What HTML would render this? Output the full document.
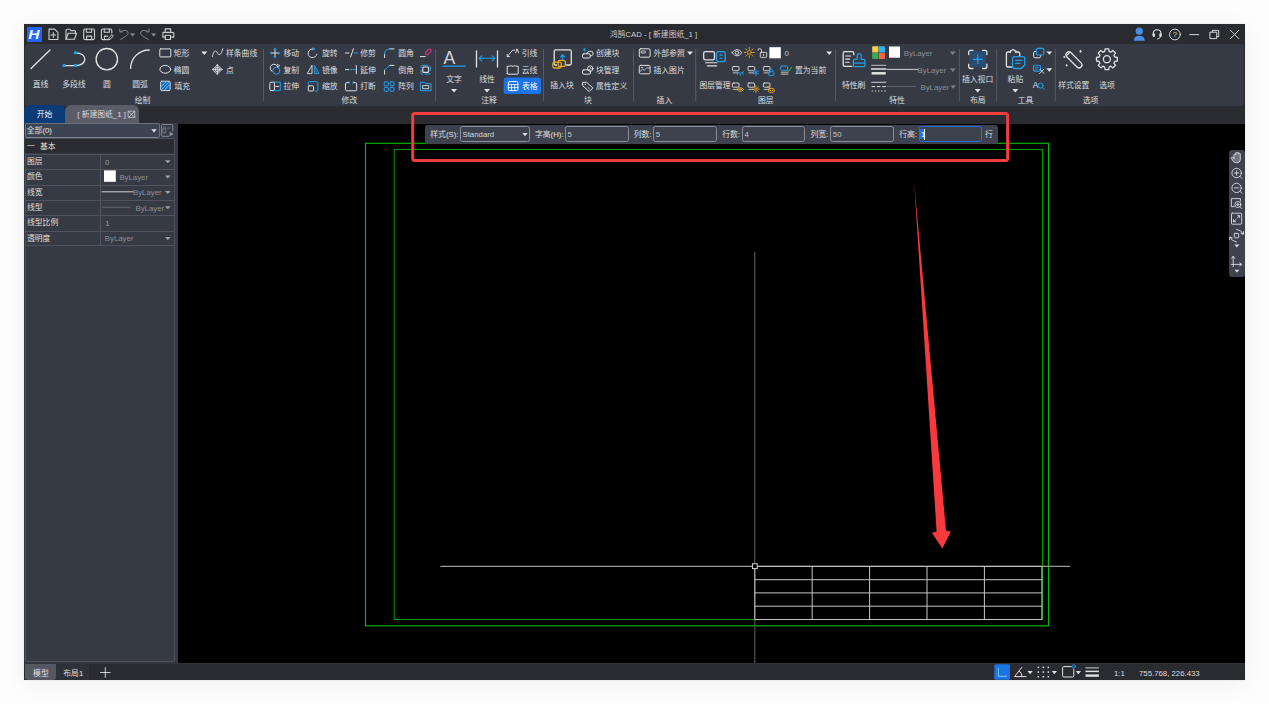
<!DOCTYPE html>
<html lang="zh-CN">
<head>
<meta charset="utf-8">
<title>鸿鹄CAD</title>
<style>
html,body{margin:0;padding:0;}
body{width:1269px;height:704px;background:#fdfdfd;position:relative;overflow:hidden;font-family:"Liberation Sans","Noto Sans CJK SC",sans-serif;font-weight:350;}
.b{position:absolute;box-sizing:border-box;}
.t{position:absolute;white-space:nowrap;line-height:12px;height:12px;}
.t.c{width:120px;text-align:center;}
.ov{position:absolute;left:0;top:0;pointer-events:none;}
.inp{position:absolute;box-sizing:border-box;top:126.4px;height:15.6px;border:1px solid #8b8f98;border-radius:2.5px;background:#3d424e;}
</style>
</head>
<body>
<!-- window -->
<div class="b" style="left:24px;top:24px;width:1221px;height:656px;background:#000;box-shadow:0 4px 22px rgba(0,0,0,.06),0 0 2px rgba(0,0,0,.08);"></div>
<div class="b" style="left:24px;top:24px;width:1221px;height:82px;background:#2a2b31;"></div>
<div class="b" style="left:24.7px;top:44.4px;width:1219.5px;height:61.2px;background:#363a44;border-radius:3px;"></div>
<div class="b" style="left:24px;top:105.7px;width:1221px;height:18.1px;background:#2b2c32;"></div>
<!-- doc tabs -->
<div class="b" style="left:24.3px;top:105.4px;width:40.6px;height:17.6px;background:#0c3c78;border-radius:6px 6px 0 0;"></div>
<div class="b" style="left:64.9px;top:105.4px;width:73.7px;height:17.6px;background:#5a5d67;border-radius:6px 6px 0 0;"></div>
<!-- left panel -->
<div class="b" style="left:24px;top:123px;width:154px;height:540px;background:#363a44;"></div>
<div class="b" style="left:24.8px;top:123.2px;width:134.8px;height:14.4px;background:#3c4454;border:1px solid #6c707b;border-bottom-color:#80848e;border-radius:2px;"></div>
<div class="b" style="left:24.6px;top:138.4px;width:150.4px;height:523.6px;border:1px solid #4b4e58;border-radius:2px;"></div>
<div class="b" style="left:25.3px;top:139.1px;width:149px;height:14.4px;background:#2b2c32;"></div>
<div class="b" style="left:25.3px;top:153.5px;width:149px;height:92px;background:repeating-linear-gradient(to bottom,#50535d 0,#50535d .9px,transparent .9px,transparent 15.33px);border-bottom:1px solid #50535d;"></div>
<div class="b" style="left:100.3px;top:153.5px;width:1px;height:92px;background:#50535d;"></div>
<svg class="ov" width="1269" height="704" viewBox="0 0 1269 704" fill="none">
<rect x="365.5" y="143.3" width="683" height="482.5" stroke="#00c000" stroke-width="1.1"/>
<rect x="394.2" y="149.5" width="648.3" height="470" stroke="#00a000" stroke-width="1"/>
<path d="M754.8 251.7V663.5" stroke="#5a5a5a" stroke-width="1.1"/>
<path d="M440.4 566.4H1070" stroke="#9a9a9a" stroke-width="1.1"/>
<path d="M754.8 566.4V619.5M812.2 566.4V619.5M869.6 566.4V619.5M927 566.4V619.5M984.4 566.4V619.5M1041.9 566.4V619.5M754.8 566.4H1041.9M754.8 579.7H1041.9M754.8 592.9H1041.9M754.8 606.2H1041.9M754.8 619.5H1041.9" stroke="#c6c6c6" stroke-width="1" stroke-linecap="butt"/>
<rect x="752.4" y="563.8" width="4.8" height="4.8" fill="#000" stroke="#e8e8e8" stroke-width=".9"/>
</svg><!-- floating toolbar -->
<div class="b" style="left:425.2px;top:124.6px;width:572.6px;height:19.2px;background:#3d424e;border-radius:3px;"></div>
<div class="inp" style="left:459.8px;width:69.9px;"></div>
<div class="inp" style="left:565.2px;width:63.5px;"></div>
<div class="inp" style="left:653.4px;width:63.5px;"></div>
<div class="inp" style="left:742.1px;width:63.4px;"></div>
<div class="inp" style="left:830.4px;width:63.3px;"></div>
<div class="inp" style="left:918.9px;width:63.1px;border-color:#2b6fd6;border-width:1.2px;"></div>
<div class="b" style="left:920.4px;top:129.3px;width:3.6px;height:10px;background:#1e6fe0;"></div>
<div class="b" style="left:924.2px;top:129px;width:.8px;height:10.6px;background:#fff;"></div>
<!-- nav bar -->
<div class="b" style="left:1228.7px;top:150px;width:16px;height:126.5px;background:#3d424e;border-radius:3px;"></div>
<!-- status bar -->
<div class="b" style="left:24px;top:662.7px;width:1221px;height:17.3px;background:#2a2b31;border-top:1.7px solid #31333a;"></div>
<div class="b" style="left:24.6px;top:664.4px;width:31.7px;height:15.6px;background:#555862;border-radius:0 0 3px 3px;"></div>
<div class="b" style="left:56.3px;top:664.4px;width:33.1px;height:15.6px;background:#2f3138;"></div>
<svg class="ov" width="1269" height="704" viewBox="0 0 1269 704" fill="none" stroke-linecap="round" stroke-linejoin="round">
<!-- title bar -->
<rect x="27" y="27" width="15" height="15" fill="#2563f5"/>
<text transform="translate(28.3 39.2) scale(1.22 1)" font-family="Liberation Sans, sans-serif" font-size="12.8" font-weight="700" font-style="italic" fill="#e6f5ff" stroke="none">H</text>
<g stroke="#cfcfd3" stroke-width="1.1">
<path d="M49 29.1h5.6l3.3 3.3v7.1h-8.9z"/><path d="M53.3 32.6v4.8M50.9 35h4.8" stroke-width="1"/>
<path d="M66 39.3V30.6q0-1.3 1.3-1.3h2.6l1 1.3h3.6q1 0 1 1v1.4"/><path d="M66 39.3l2.2-6.1h8.4l-2.2 6.1z"/>
<rect x="83.7" y="29" width="10.8" height="10.6" rx="1.5"/><path d="M86.4 29.2v3h5.2v-3M86.6 39.4v-3.3h5v3.3"/>
<path d="M108 39.6h-5.2q-1.4 0-1.4-1.4V30.4q0-1.4 1.4-1.4h7.6q1.4 0 1.4 1.4V33"/><path d="M104.2 29.2v3h5.2v-3M104.4 39.4v-3.3h3.2"/>
<path d="M108.6 39.6l.6-2.2 2.8-2.8 1.4 1.4-2.8 2.8z" stroke-width="1"/>
<path d="M162.9 32.4h9.9q1 0 1 1v3.7h-2.4M165.3 37.1h-2.4v-3.7"/><path d="M165.2 32.2v-3.3h5.4v3.3M165.3 35.3h5.2v4.2h-5.2z"/>
</g>
<g stroke="#80838b" stroke-width="1">
<path d="M119.8 29v2.9h2.9"/><path d="M120.2 31.7q3.5-2.3 6.6-.9q3 2.3-.6 5.2l-5.7 3.6"/>
<path d="M149 29v2.9h-2.9"/><path d="M148.6 31.7q-3.5-2.3-6.6-.9q-3 2.3.6 5.2l5.7 3.6"/>
</g>
<path d="M129.9 33.6h5.2l-2.6 2.8zM151.1 33.6h5.2l-2.6 2.8z" fill="#8d9098"/>
<!-- window controls -->
<g stroke="#d6d6da" stroke-width="1">
<path d="M1189.8 34.6h9"/><path d="M1210.3 32.2h6.4v6.4h-6.4z"/><path d="M1212.3 32v-1.6h6.4v6.4h-1.8"/>
<path d="M1230.5 30.3l8.3 8.4M1238.8 30.3l-8.3 8.4"/>
<circle cx="1174.9" cy="34.5" r="5.4"/><text x="1172.7" y="37.3" font-family="Liberation Sans, sans-serif" font-size="7.8" fill="#d6d6da" stroke="none">?</text>
</g>
<circle cx="1139.3" cy="31.2" r="3.6" fill="#4a8de6"/><path d="M1133.8 40.8q.3-5 5.5-5t5.5 5z" fill="#4a8de6"/>
<g stroke="#e4e4e7" stroke-width="1.05"><path d="M1153.2 35.3v-1.5q0-4 3.9-4t3.9 4v1.5"/><path d="M1160.6 36.8q-.5 2-3 2.2" stroke-width=".9"/></g>
<rect x="1152.7" y="33.2" width="2.2" height="3.8" rx=".9" fill="#e4e4e7"/><rect x="1159.3" y="33.2" width="2.2" height="3.8" rx=".9" fill="#e4e4e7"/>
<path d="M263.5 49.5V100.5" stroke="#575a64" stroke-width="1"/>
<path d="M435.7 49.5V100.5" stroke="#575a64" stroke-width="1"/>
<path d="M543.5 49.5V100.5" stroke="#575a64" stroke-width="1"/>
<path d="M633.6 49.5V100.5" stroke="#575a64" stroke-width="1"/>
<path d="M695.7 49.5V100.5" stroke="#575a64" stroke-width="1"/>
<path d="M835.6 49.5V100.5" stroke="#575a64" stroke-width="1"/>
<path d="M959.4 49.5V100.5" stroke="#575a64" stroke-width="1"/>
<path d="M996.7 49.5V100.5" stroke="#575a64" stroke-width="1"/>
<path d="M1055.3 49.5V100.5" stroke="#575a64" stroke-width="1"/>
<g stroke="#e2e2e4" stroke-width="1.35">
<path d="M31 68.6L50 50"/>
<path d="M64 65.6H75.4C88 65.6 88 52.8 75.4 52.8"/>
<circle cx="106.8" cy="59.2" r="10.7"/>
<path d="M130.6 68.4A18.6 18.4 0 0 1 149.2 50"/>
</g>
<rect x="73.9" y="51.3" width="3" height="3" rx=".8" fill="#1ea0f2"/>
<rect x="62.5" y="64.1" width="3" height="3" rx=".8" fill="#1ea0f2"/>
<rect x="73.9" y="64.1" width="3" height="3" rx=".8" fill="#1ea0f2"/>
<g stroke="#e2e2e4" stroke-width="1">
<rect x="159.8" y="48.9" width="11" height="8" rx=".8"/>
<ellipse cx="165.3" cy="69.3" rx="5.4" ry="3.9"/>
<path d="M212.3 56.6C213.8 50 216 49.6 217.5 53S221.3 54.5 222.8 48.8"/>
<circle cx="217.4" cy="69.4" r="2.3" stroke-width=".8"/><path d="M217.4 64.4v10M212.4 69.4h10" stroke-width=".8"/><path d="M212.8 69.4l4.6-4.7 4.6 4.7-4.6 4.7z" stroke-width=".8" fill="#e2e2e433"/>
</g>
<rect x="160.6" y="81.2" width="9.6" height="9.4" rx="1.2" fill="#1b6fc0" stroke="#e2e2e4" stroke-width=".9"/>
<path d="M161.5 86.5l4.5-4.5M161.5 89.6l7.8-7.8M164.5 89.8l5-5" stroke="#6cc4ff" stroke-width=".8"/>
<path d="M201.3 51.6h6l-3 3.4z" fill="#e2e2e4" stroke="none"/>
<path d="M275 49.5v7M271.5 53h7" stroke="#e2e2e4" stroke-width="1"/>
<path d="M275 47.5l1.8 2.3h-3.6zM275 58.5l1.8-2.3h-3.6zM269.5 53l2.3-1.8v3.6zM280.5 53l-2.3-1.8v3.6z" fill="#1ea0f2"/>
<path d="M272.2 71.5a3.9 3.9 0 1 1 5.6-4.6" stroke="#e2e2e4" stroke-width="1"/>
<circle cx="276.3" cy="70.8" r="3.5" stroke="#1ea0f2" stroke-width="1"/>
<path d="M277.3 64.6l2.3.9-1.5 1.8" stroke="#e2e2e4" stroke-width=".9"/>
<path d="M274 82.2h-3q-1.2 0-1.2 1.2v6q0 1.2 1.2 1.2h3z" stroke="#e2e2e4" stroke-width="1"/>
<path d="M274 82.2h6.3v8.4H274" stroke="#1ea0f2" stroke-width="1"/><path d="M275.8 86.4h3" stroke="#e2e2e4" stroke-width="1"/>
<path d="M316.9 54.3a4.4 4.4 0 1 1-3.5-5.4" stroke="#e2e2e4" stroke-width=".95"/>
<path d="M312.8 47l2.7 2-2.9 1.7z" fill="#1ea0f2"/>
<path d="M312 65.6v8h-4.3z" stroke="#e2e2e4" stroke-width=".9"/><path d="M314.3 65.6v8h4.3z" stroke="#1ea0f2" stroke-width=".9" fill="#1ea0f255"/>
<path d="M308.3 84.4v-1.5q0-1.2 1.2-1.2h7.2q1.2 0 1.2 1.2v7q0 1.2-1.2 1.2h-1.7" stroke="#1ea0f2" stroke-width="1"/>
<rect x="308.3" y="85.8" width="5.2" height="5.2" rx=".8" stroke="#e2e2e4" stroke-width="1"/>
<path d="M345.4 53h3.6M350.6 57l2.8-8.2" stroke="#e2e2e4" stroke-width="1"/><path d="M354.3 53h1.3M356.5 53h1" stroke="#1ea0f2" stroke-width="1"/>
<path d="M345.4 69.6h3.4M356.3 65.5v8.3" stroke="#e2e2e4" stroke-width="1"/><path d="M350.3 69.6h1.5M353 69.6h2" stroke="#1ea0f2" stroke-width="1"/>
<path d="M349 82.6h-2.3q-1.2 0-1.2 1.2v5.8q0 1.2 1.2 1.2h8.8q1.2 0 1.2-1.2v-5.8q0-1.2-1.2-1.2h-2.3" stroke="#e2e2e4" stroke-width="1"/>
<path d="M349 81.6v2M353.2 81.6v2" stroke="#1ea0f2" stroke-width="1"/>
<path d="M384.6 57.6v-3.5M389.6 48.9h4.4" stroke="#e2e2e4" stroke-width="1"/><path d="M384.6 54.1q0-5.2 5-5.2" stroke="#1ea0f2" stroke-width="1"/>
<path d="M384.6 74.2v-4M389.3 65.4h4.7" stroke="#e2e2e4" stroke-width="1"/><path d="M384.6 70.2l4.7-4.8" stroke="#1ea0f2" stroke-width="1"/>
<rect x="384.3" y="81.8" width="4" height="4" rx=".9" stroke="#1ea0f2" stroke-width="1"/>
<rect x="384.3" y="87.3" width="4" height="4" rx=".9" stroke="#1ea0f2" stroke-width="1"/>
<rect x="390" y="81.8" width="4" height="4" rx=".9" stroke="#1ea0f2" stroke-width="1"/>
<rect x="390" y="87.3" width="4" height="4" rx=".9" stroke="#1ea0f2" stroke-width="1"/>
<path d="M420.3 56.6h5" stroke="#e2e2e4" stroke-width="1"/>
<rect x="425" y="50.3" width="6.4" height="3.2" rx="1.2" transform="rotate(-42 428.2 51.9)" stroke="#e0357f" stroke-width="1"/>
<rect x="421" y="65.3" width="9.4" height="8.8" rx="1.5" stroke="#1ea0f2" stroke-width="1" stroke-dasharray="5 2.5"/><rect x="422.8" y="67" width="5.8" height="5.4" rx=".8" stroke="#e2e2e4" stroke-width="1.1"/>
<path d="M420.4 90.3v-8h4l1.2 1.4h5.4v6.6z" stroke="#1ea0f2" stroke-width="1"/><path d="M422.6 88.3v-2.7h6.2v2.7z" stroke="#e2e2e4" stroke-width=".9"/>
<text x="443.4" y="64" font-family="Liberation Sans, sans-serif" font-size="17.6" fill="#d2d2d6" stroke="none">A</text>
<path d="M442.9 66.1H465.2" stroke="#1ea0f2" stroke-width="1.3"/>
<path d="M451 89.1h6l-3 3.4z" fill="#e2e2e4" stroke="none"/>
<path d="M484 89.1h6l-3 3.4z" fill="#e2e2e4" stroke="none"/>
<path d="M476.5 51v16M497.5 51v16" stroke="#e2e2e4" stroke-width="1.3"/>
<path d="M479 58.3h16M481.8 55.8l-2.8 2.5 2.8 2.5M492.2 55.8l2.8 2.5-2.8 2.5" stroke="#1ea0f2" stroke-width="1.1"/>
<path d="M507.3 56.4l5.4-6.3h2M507.2 54.3v2.3h2.3M515.6 52.8l1.5-4 1.5 4" stroke="#e2e2e4" stroke-width=".95"/>
<path d="M507.2 73.4v-7.2h2.4q1.2-1.2 2.4 0h1.4q1.2-1.2 2.4 0h2.4v7.2q0 .8-.8.8h-9.4q-.8 0-.8-.8z" stroke="#e2e2e4" stroke-width="1"/>
<rect x="503.7" y="77.6" width="37.3" height="16.4" rx="2.6" fill="#1b73e8"/>
<rect x="508.3" y="81.6" width="9.6" height="9" rx="1.3" stroke="#fff" stroke-width="1"/><path d="M508.3 84.6h9.6M508.3 87.6h9.6M511.5 84.6v6M514.7 84.6v6" stroke="#fff" stroke-width=".8"/>
<path d="M556.5 65h-1q-1.3 0-1.3-1.3V51.3q0-1.5 1.5-1.5h14.1q1.5 0 1.5 1.5v12.2q0 1.5-1.5 1.5h-3.3" stroke="#e2e2e4" stroke-width="1.3"/>
<path d="M562.6 60.5v-5M560.6 56.8l2-2.2 2 2.2" stroke="#1ea0f2" stroke-width="1.2"/>
<rect x="552.8" y="62.2" width="8.4" height="5.8" rx="1.7" stroke="#e5a918" stroke-width="1.3"/><rect x="558" y="60.4" width="7.4" height="6" rx="2" stroke="#e5a918" stroke-width="1.3"/>
<rect x="582.6" y="53.8" width="7.6" height="4.2" rx="1.2" stroke="#e2e2e4" stroke-width="1"/><path d="M586.6 53.6q.4-2.2 3-2.2h2q1.3 0 1.3 1.3v1.6q0 1.6-2.5 1.8" stroke="#e2e2e4" stroke-width="1"/>
<path d="M584.4 48.2v3.2M583 49.8h2.8" stroke="#1ea0f2" stroke-width=".9"/>
<rect x="582.6" y="69.8" width="7.8" height="4.4" rx="1.2" stroke="#e2e2e4" stroke-width="1"/><circle cx="590.3" cy="68.6" r="2.7" stroke="#e2e2e4" stroke-width="1"/><path d="M590.3 67.3v1.5h1.2" stroke="#e2e2e4" stroke-width=".7"/>
<path d="M583 82.3h3.6l6.3 5.6-3.7 3.7-6.2-5.6z" stroke="#e2e2e4" stroke-width="1"/><circle cx="585.2" cy="84.4" r=".7" fill="#e2e2e4"/><path d="M587.8 87.3l1.6 1.5" stroke="#e2e2e4" stroke-width=".8"/>
<rect x="639.3" y="48.8" width="10.8" height="8.4" rx="1.2" stroke="#e2e2e4" stroke-width="1"/><rect x="641.6" y="51" width="3.6" height="2" stroke="#e2e2e4" stroke-width=".8"/>
<rect x="639.3" y="65.4" width="10.8" height="8.4" rx="1.2" stroke="#e2e2e4" stroke-width="1"/><path d="M640 71.5l2.6-2.4 1.6 1.3 2.4-2.4h3.2M641.3 67.6h1.6" stroke="#e2e2e4" stroke-width=".8"/>
<path d="M687 51.6h6l-3 3.4z" fill="#e2e2e4" stroke="none"/>
<rect x="703.7" y="51.6" width="10.8" height="8.2" rx="1.6" stroke="#e2e2e4" stroke-width="1.3"/><path d="M705.6 62.8h11.3M707.4 65.9h9.4" stroke="#e2e2e4" stroke-width="1.1"/>
<rect x="716.6" y="51.6" width="8.6" height="10" rx="2" stroke="#1ea0f2" stroke-width="1.3"/><path d="M720 55h1.8M720 58.3h1.8" stroke="#1ea0f2" stroke-width="1.3"/>
<path d="M732 52.7q5-6.4 10 0q-5 6.4-10 0z" stroke="#e2e2e4" stroke-width=".9"/><circle cx="737" cy="52.7" r="1.7" stroke="#e2e2e4" stroke-width=".9"/>
<circle cx="749.3" cy="52.5" r="1.9" stroke="#e5a918" stroke-width=".9"/><path d="M752.6 52.5L754.4 52.5M751.6 54.8L752.9 56.1M749.3 55.8L749.3 57.6M747 54.8L745.7 56.1M746 52.5L744.2 52.5M747 50.2L745.7 48.9M749.3 49.2L749.3 47.4M751.6 50.2L752.9 48.9" stroke="#e5a918" stroke-width=".9"/>
<rect x="760.3" y="52.4" width="6.4" height="5" rx=".8" stroke="#e2e2e4" stroke-width=".9"/><path d="M761.6 52.3v-1.6q0-2-2-2t-1.7 1.5" stroke="#e2e2e4" stroke-width=".9"/><path d="M763.5 54.3v1.3" stroke="#e2e2e4" stroke-width=".8"/>
<rect x="769.4" y="47.2" width="11.4" height="11.1" fill="#fff"/>
<path d="M826.2 51.6h6l-3 3.4z" fill="#e2e2e4" stroke="none"/>
<rect x="732.4" y="66.5" width="6.6" height="4.2" rx="1" stroke="#e2e2e4" stroke-width=".9"/><path d="M733.2 72.9h5" stroke="#e2e2e4" stroke-width=".8"/>
<g transform="translate(740.3 72.6)" stroke="#1ea0f2" stroke-width=".9"><path d="M-3.4-.6q3.4 2.6 6.8 0M-2.3.8l-.8 1.3M0 1.4v1.5M2.3.8l.8 1.3"/></g>
<rect x="748" y="66.5" width="6.6" height="4.2" rx="1" stroke="#e2e2e4" stroke-width=".9"/><path d="M748.8 72.9h5" stroke="#e2e2e4" stroke-width=".8"/>
<g transform="translate(755.9 72.6)" stroke="#1ea0f2" stroke-width=".85"><path d="M0-3.2v6.4M-2.8-1.6l5.6 3.2M-2.8 1.6l5.6-3.2"/></g>
<rect x="763.4" y="66.5" width="6.6" height="4.2" rx="1" stroke="#e2e2e4" stroke-width=".9"/><path d="M764.2 72.9h5" stroke="#e2e2e4" stroke-width=".8"/>
<g transform="translate(771.3 72.6)" stroke="#1ea0f2" stroke-width=".9"><rect x="-2.6" y="-.8" width="5.2" height="3.8" rx=".6"/><path d="M-1.4-.9v-1q0-1.4 1.4-1.4t1.4 1.4v1"/></g>
<rect x="732.4" y="83" width="6.6" height="4.2" rx="1" stroke="#e2e2e4" stroke-width=".9"/><path d="M733.2 89.4h5" stroke="#e2e2e4" stroke-width=".8"/>
<g transform="translate(740.3 89.1)" stroke="#e5a918" stroke-width=".9"><path d="M-3.4.4q3.4-3.8 6.8 0q-3.4 3.8-6.8 0z"/><circle cx="0" cy=".4" r=".9"/></g>
<rect x="748" y="83" width="6.6" height="4.2" rx="1" stroke="#e2e2e4" stroke-width=".9"/><path d="M748.8 89.4h5" stroke="#e2e2e4" stroke-width=".8"/>
<g transform="translate(755.9 89.1)" stroke="#e5a918" stroke-width=".85"><circle cx="0" cy="0" r="1.1"/><path d="M0-3.3v1.2M0 2.1v1.2M-3.3 0h1.2M2.1 0h1.2M-2.3-2.3l.8.8M1.5 1.5l.8.8M-2.3 2.3l.8-.800M1.5-1.5l.8-.8"/></g>
<rect x="763.4" y="83" width="6.6" height="4.2" rx="1" stroke="#e2e2e4" stroke-width=".9"/><path d="M764.2 89.4h5" stroke="#e2e2e4" stroke-width=".8"/>
<g transform="translate(771.3 89.1)" stroke="#e5a918" stroke-width=".9"><rect x="-2.6" y="-.6" width="5.4" height="3.8" rx=".6"/><path d="M-1.6-.7v-1q0-1.3-1.3-1.3t-1.3 1"/><path d="M-.9 1.3h.1M1 1.3h.1" stroke-width="1.1"/></g>
<rect x="780.6" y="66" width="7" height="4.3" rx="1" stroke="#1ea0f2" stroke-width="1"/><path d="M781.4 72.2h6.6M781 74.1h7" stroke="#e2e2e4" stroke-width=".8"/><path d="M787.2 69.6l1.5 1.7 2.8-4.2" stroke="#37c44b" stroke-width="1"/>
<path d="M852 66.3h-7.2q-1.6 0-1.6-1.6V53.3q0-1.6 1.6-1.6h7.4q1.6 0 1.6 1.6v1.5" stroke="#e2e2e4" stroke-width="1.3"/><path d="M845.7 56h5M845.7 59.1h4M845.7 62.2h3.5" stroke="#e2e2e4" stroke-width="1.1"/>
<path d="M857.3 59.3v-3.8q0-2 1.9-2t1.9 2v3.8h2.6q1.3 0 1.3 1.3v4.7q0 1.3-1.3 1.3h-9q-1.3 0-1.3-1.3v-4.7q0-1.3 1.3-1.3zM853.5 63h11.4" stroke="#1ea0f2" stroke-width="1.25" fill="#363a44"/>
<path d="M872.2 52.5v-5q0-1.2 1.2-1.2h5v6.2z" fill="#f7d046"/><path d="M878.8 52.5v-6.2h5q1.2 0 1.2 1.2v5z" fill="#2bb7f7"/><path d="M872.2 52.9h6.2v6.2h-5q-1.2 0-1.2-1.2z" fill="#35b24f"/><path d="M878.8 52.9h6.2v5q0 1.2-1.2 1.2h-5z" fill="#f3643c"/>
<rect x="889" y="46.5" width="11" height="11.2" fill="#fff"/>
<path d="M949.8 51.6h6l-3 3.4z" fill="#7d818b" stroke="none"/>
<path d="M949.8 68.5h6l-3 3.4z" fill="#7d818b" stroke="none"/>
<path d="M950.6 85.5h5.2l-2.6 3.2z" fill="#7d818b" stroke="none"/>
<path d="M871.6 65.3h14.2" stroke="#e2e2e4" stroke-width=".8"/><path d="M871.6 69h14.2" stroke="#e2e2e4" stroke-width="1.6"/><path d="M871.6 73.3h14.2" stroke="#e2e2e4" stroke-width="2.5" stroke-linecap="butt"/>
<path d="M887 69.4H917.6" stroke="#e2e2e4" stroke-width=".9"/>
<path d="M871.6 82.3h14.2" stroke="#e2e2e4" stroke-width=".9"/><path d="M871.6 86.6h14.2" stroke="#e2e2e4" stroke-width="1" stroke-dasharray="3.6 1.7" stroke-linecap="butt"/><path d="M871.6 91h14.2" stroke="#e2e2e4" stroke-width="1" stroke-dasharray="1.3 1.9" stroke-linecap="butt"/>
<path d="M887 86.4H915.7" stroke="#777b85" stroke-width=".7"/>
<rect x="969.6" y="51" width="16.6" height="16.6" rx="2" fill="#2a4a6e"/>
<path d="M968.7 54.6v-2.3q0-2 2-2h2.3M982.6 50.3h2.3q2 0 2 2v2.3M986.9 64.2v2.3q0 2-2 2h-2.3M973 68.5h-2.3q-2 0-2-2v-2.3" stroke="#e2e2e4" stroke-width="1.3"/>
<path d="M977.8 55v8.6M973.5 59.3h8.6" stroke="#1ea0f2" stroke-width="1.3"/>
<path d="M974.7 89.1h6l-3 3.4z" fill="#e2e2e4" stroke="none"/>
<path d="M1011.5 67h-3.5q-1.6 0-1.6-1.6V53.6q0-1.6 1.6-1.6h2M1015.8 52h2.3q1.6 0 1.6 1.6v2" stroke="#e2e2e4" stroke-width="1.3"/><path d="M1010.3 52.6v-1.7h1.3q.3-1.3 1.5-1.3t1.5 1.3h1.3v1.7" stroke="#e2e2e4" stroke-width="1.1"/>
<path d="M1014.5 56.6h8.4q1.9 0 1.9 1.9v6.3l-3.6 3.7h-6.7q-1.9 0-1.9-1.9v-8.1q0-1.9 1.9-1.9z" stroke="#1ea0f2" stroke-width="1.3" fill="#363a44"/><path d="M1015.6 60.3h6.2M1015.6 63.3h4.4" stroke="#1ea0f2" stroke-width="1.3"/>
<path d="M1012.3 89.1h6l-3 3.4z" fill="#e2e2e4" stroke="none"/>
<rect x="1033.6" y="51.4" width="7" height="6.4" rx="1.4" stroke="#e2e2e4" stroke-width="1"/><rect x="1036.4" y="48.4" width="7.4" height="6.6" rx="1.4" stroke="#1ea0f2" stroke-width="1.1" fill="#363a44"/>
<path d="M1046.3 51.4h6l-3 3.4z" fill="#e2e2e4" stroke="none"/>
<rect x="1033.4" y="65.3" width="7" height="5.8" rx="1.2" stroke="#1ea0f2" stroke-width="1.1"/><path d="M1035 67.3h3.6M1035 69.1h2.6" stroke="#1ea0f2" stroke-width=".8"/><path d="M1039.5 73.6l4.5-4.5M1040 69.3l3.8 4" stroke="#e2e2e4" stroke-width=".9"/>
<path d="M1046.3 68.3h6l-3 3.4z" fill="#e2e2e4" stroke="none"/>
<text x="1032.7" y="87.6" font-family="Liberation Sans, sans-serif" font-size="8.4" fill="#e2e2e4" stroke="none">A</text><circle cx="1040.6" cy="85.6" r="2.5" stroke="#1ea0f2" stroke-width="1"/><path d="M1042.4 87.6l1.6 1.8" stroke="#1ea0f2" stroke-width="1"/>
<rect x="1064" y="57" width="20" height="5.8" rx="2.9" transform="rotate(45 1074 59.9)" stroke="#e2e2e4" stroke-width="1.3"/><path d="M1069.6 52.6l-2.6 2.6" stroke="#e2e2e4" stroke-width="1.2"/>
<path d="M1080.5 50.3v2M1079.5 51.3h2M1064.3 56.3v1.4M1063.6 57h1.4M1066.6 64.6v1.4M1065.9 65.3h1.4" stroke="#e2e2e4" stroke-width=".9"/>
<path d="M1104.7 51.4L1105.1 48.8L1108.7 48.8L1109.1 51.4L1110.9 52.2L1113 50.5L1115.6 53.1L1113.9 55.2L1114.7 57L1117.3 57.4L1117.3 61L1114.7 61.4L1113.9 63.2L1115.6 65.3L1113 67.9L1110.9 66.2L1109.1 67L1108.7 69.6L1105.1 69.6L1104.7 67L1102.9 66.2L1100.8 67.9L1098.2 65.3L1099.9 63.2L1099.1 61.4L1096.5 61L1096.5 57.4L1099.1 57L1099.9 55.2L1098.2 53.1L1100.8 50.5L1102.9 52.2z" stroke="#e2e2e4" stroke-width="1.3"/><circle cx="1106.9" cy="59.2" r="3.5" stroke="#e2e2e4" stroke-width="1.3"/><rect x="128.5" y="111.2" width="6.3" height="6.3" stroke="#d0d1d5" stroke-width=".7"/><path d="M128.7 111.4l5.9 5.9M134.6 111.4l-5.9 5.9" stroke="#d0d1d5" stroke-width=".8"/>
<path d="M151.3 129.2h5.4l-2.7 3.2z" fill="#e2e2e4" stroke="none"/>
<path d="M172.8 131v-5.3q0-1.2-1.2-1.2h-9q-1.2 0-1.2 1.2v9.4q0 1.2 1.2 1.2h6" stroke="#8d9199" stroke-width=".9"/><path d="M163.3 128.3h2.4v4.6h-2.4zM167.3 128h3M163.3 127h2.4" stroke="#8d9199" stroke-width=".7"/><path d="M169.6 131.8l4 2.3-4 2.5z" fill="#8d9199"/>
<path d="M165 160.3h5.6l-2.8 3z" fill="#9fa3ad" stroke="none"/>
<path d="M165 175.6h5.6l-2.8 3z" fill="#9fa3ad" stroke="none"/>
<path d="M165 190.9h5.6l-2.8 3z" fill="#9fa3ad" stroke="none"/>
<path d="M165 206.2h5.6l-2.8 3z" fill="#9fa3ad" stroke="none"/>
<path d="M165 236.9h5.6l-2.8 3z" fill="#9fa3ad" stroke="none"/>
<rect x="104" y="170.4" width="11.8" height="11.4" fill="#fff"/>
<path d="M102 191.8H133" stroke="#e2e2e4" stroke-width=".9"/><path d="M102.2 207.2H130.3" stroke="#777b85" stroke-width=".7"/>
<path d="M914.2 182.8L946 530.8L950.8 531.4L942.4 548.5L931.8 532.8L936.6 531.8Z" fill="#f93a3c"/>
<rect x="412.7" y="113.5" width="594.9" height="47" rx="2" stroke="#f23c3e" stroke-width="3"/>
<path d="M522.3 133h5.4l-2.7 3.2z" fill="#e2e2e4" stroke="none"/>
<g stroke="#dcdde0" stroke-width=".9">
<path d="M1233.9 158.6v-3.7q0-.8.8-.8t.8.8v-1.5q0-.8.8-.8t.8.8v-.2q0-.8.8-.8t.8.8v.9q0-.8.8-.8t.8.8v5.4q0 3.2-3.2 3.2h-1.2q-1.7 0-2.6-1.4l-1.9-2.9q-.4-.8.3-1.2t1.4.4z" fill="#dcdde055"/>
<circle cx="1236.6" cy="173" r="4.7"/><path d="M1240 176.4l1.9 2M1234.4 173h4.4M1236.6 170.8v4.4"/>
<circle cx="1236.6" cy="187.9" r="4.7"/><path d="M1240 191.3l1.9 2M1234.4 187.9h4.4"/>
<path d="M1234.3 206.6h-2.9v-8h9v2.5"/><circle cx="1237.9" cy="204.5" r="3"/><path d="M1240.1 206.8l1.7 1.8M1236.7 204.5h2.4M1237.9 203.3v2.4"/>
<rect x="1231.5" y="213.2" width="10.2" height="11" rx=".7"/><path d="M1237.6 215.7h2v2M1235.6 221.7h-2v-2M1239.6 215.7l-2.2 2.2M1233.6 221.7l2.2-2.2"/>
<rect x="1234.3" y="233.4" width="4.4" height="4.4" rx=".6"/><path d="M1236.6 229.3q5 .8 6.6 4.8M1243.6 231.6l-.3 2.6-2.4-.8M1236.5 242q-5-.8-6.6-4.8M1229.6 239.7l.3-2.6 2.4.8"/>
<path d="M1233.2 256.4v10.2M1231.2 264.4h10.4M1231.7 258.3l1.5-2.1 1.5 2.1M1239.7 262.9l2.1 1.5-2.1 1.5"/>
</g>
<path d="M1234.4 244.6h5l-2.5 2.8z" fill="#dcdde0" stroke="none"/>
<path d="M1234.4 269.8h5l-2.5 2.8z" fill="#dcdde0" stroke="none"/>
<rect x="994.3" y="664.3" width="15.7" height="15.4" rx="1.5" fill="#1b73e8"/>
<path d="M998.3 668v8.3h8.3" stroke="#7fc0ff" stroke-width="1"/>
<path d="M1026 676.6h-11.4l7.2-9.2M1019.6 671.3q2.3 1.8 2.4 5" stroke="#e2e2e4" stroke-width="1"/>
<path d="M1027.5 671.1h5.2l-2.6 3.2z" fill="#e2e2e4" stroke="none"/>
<rect x="1037.6" y="666.6" width="1.5" height="1.5" fill="#e2e2e4"/><rect x="1037.6" y="671.3" width="1.5" height="1.5" fill="#e2e2e4"/><rect x="1037.6" y="676" width="1.5" height="1.5" fill="#e2e2e4"/><rect x="1042.6" y="666.6" width="1.5" height="1.5" fill="#e2e2e4"/><rect x="1042.6" y="671.3" width="1.5" height="1.5" fill="#e2e2e4"/><rect x="1042.6" y="676" width="1.5" height="1.5" fill="#e2e2e4"/><rect x="1047.6" y="666.6" width="1.5" height="1.5" fill="#e2e2e4"/><rect x="1047.6" y="671.3" width="1.5" height="1.5" fill="#e2e2e4"/><rect x="1047.6" y="676" width="1.5" height="1.5" fill="#e2e2e4"/>
<path d="M1051.8 671.1h5.2l-2.6 3.2z" fill="#e2e2e4" stroke="none"/>
<path d="M1071.5 666.6h-7.7q-1.2 0-1.2 1.2v8q0 1.2 1.2 1.2h8.8q1.2 0 1.2-1.2v-6.3" stroke="#e2e2e4" stroke-width="1"/><circle cx="1073.8" cy="666.5" r="1.7" stroke="#1ea0f2" stroke-width="1"/>
<path d="M1075.8 671.1h5.2l-2.6 3.2z" fill="#e2e2e4" stroke="none"/>
<path d="M1085.5 667.9h13.4" stroke="#e2e2e4" stroke-width=".9" stroke-linecap="butt"/><path d="M1085.5 671.4h13.4" stroke="#e2e2e4" stroke-width="1.5" stroke-linecap="butt"/><path d="M1085.5 675.6h13.4" stroke="#e2e2e4" stroke-width="2.4" stroke-linecap="butt"/>
<path d="M100.5 672.5h9.6M105.3 667.7v9.6" stroke="#e2e2e4" stroke-width=".9"/>
</svg><div class="t c" style="left:593.5px;top:29.4px;color:#cfcfd2;font-size:7.8px;">鸿鹄CAD - [ 新建图纸_1 ]</div>
<div class="t c" style="left:-19.4px;top:79.2px;color:#e4e4e6;font-size:7.8px;">直线</div>
<div class="t c" style="left:13.9px;top:79.2px;color:#e4e4e6;font-size:7.8px;">多段线</div>
<div class="t c" style="left:47px;top:79.2px;color:#e4e4e6;font-size:7.8px;">圆</div>
<div class="t c" style="left:80px;top:79.2px;color:#e4e4e6;font-size:7.8px;">圆弧</div>
<div class="t" style="left:173.8px;top:47.9px;color:#e4e4e6;font-size:7.8px;">矩形</div>
<div class="t" style="left:173.8px;top:64.5px;color:#e4e4e6;font-size:7.8px;">椭圆</div>
<div class="t" style="left:174.5px;top:81.2px;color:#e4e4e6;font-size:7.8px;">填充</div>
<div class="t" style="left:226px;top:47.9px;color:#e4e4e6;font-size:7.8px;">样条曲线</div>
<div class="t" style="left:226px;top:64.5px;color:#e4e4e6;font-size:7.8px;">点</div>
<div class="t c" style="left:82.6px;top:95.1px;color:#e4e4e6;font-size:7.8px;">绘制</div>
<div class="t" style="left:283.4px;top:47.9px;color:#e4e4e6;font-size:7.8px;">移动</div>
<div class="t" style="left:283.4px;top:64.5px;color:#e4e4e6;font-size:7.8px;">复制</div>
<div class="t" style="left:283.4px;top:81.2px;color:#e4e4e6;font-size:7.8px;">拉伸</div>
<div class="t" style="left:321.9px;top:47.9px;color:#e4e4e6;font-size:7.8px;">旋转</div>
<div class="t" style="left:321.9px;top:64.5px;color:#e4e4e6;font-size:7.8px;">镜像</div>
<div class="t" style="left:321.9px;top:81.2px;color:#e4e4e6;font-size:7.8px;">缩放</div>
<div class="t" style="left:360.3px;top:47.9px;color:#e4e4e6;font-size:7.8px;">修剪</div>
<div class="t" style="left:360.3px;top:64.5px;color:#e4e4e6;font-size:7.8px;">延伸</div>
<div class="t" style="left:360.3px;top:81.2px;color:#e4e4e6;font-size:7.8px;">打断</div>
<div class="t" style="left:398.2px;top:47.9px;color:#e4e4e6;font-size:7.8px;">圆角</div>
<div class="t" style="left:398.2px;top:64.5px;color:#e4e4e6;font-size:7.8px;">倒角</div>
<div class="t" style="left:398.2px;top:81.2px;color:#e4e4e6;font-size:7.8px;">阵列</div>
<div class="t c" style="left:289.4px;top:95.1px;color:#e4e4e6;font-size:7.8px;">修改</div>
<div class="t c" style="left:394px;top:74.4px;color:#e4e4e6;font-size:7.8px;">文字</div>
<div class="t c" style="left:427px;top:74.4px;color:#e4e4e6;font-size:7.8px;">线性</div>
<div class="t" style="left:521.7px;top:47.9px;color:#e4e4e6;font-size:7.8px;">引线</div>
<div class="t" style="left:521.7px;top:64.5px;color:#e4e4e6;font-size:7.8px;">云线</div>
<div class="t" style="left:522px;top:81.2px;color:#fff;font-size:7.8px;">表格</div>
<div class="t c" style="left:429px;top:95.1px;color:#e4e4e6;font-size:7.8px;">注释</div>
<div class="t c" style="left:502px;top:79.7px;color:#e4e4e6;font-size:7.8px;">插入块</div>
<div class="t" style="left:596px;top:47.9px;color:#e4e4e6;font-size:7.8px;">创建块</div>
<div class="t" style="left:596px;top:64.5px;color:#e4e4e6;font-size:7.8px;">块管理</div>
<div class="t" style="left:596px;top:81.2px;color:#e4e4e6;font-size:7.8px;">属性定义</div>
<div class="t c" style="left:528px;top:95.1px;color:#e4e4e6;font-size:7.8px;">块</div>
<div class="t" style="left:653.5px;top:47.9px;color:#e4e4e6;font-size:7.8px;">外部参照</div>
<div class="t" style="left:653.5px;top:64.5px;color:#e4e4e6;font-size:7.8px;">插入图片</div>
<div class="t c" style="left:604.4px;top:95.1px;color:#e4e4e6;font-size:7.8px;">插入</div>
<div class="t c" style="left:655px;top:79.7px;color:#e4e4e6;font-size:7.8px;">图层管理</div>
<div class="t" style="left:784.6px;top:47.9px;color:#c4c6cc;font-size:7.8px;">0</div>
<div class="t" style="left:795px;top:65.1px;color:#e4e4e6;font-size:7.8px;">置为当前</div>
<div class="t c" style="left:705.8px;top:95.1px;color:#e4e4e6;font-size:7.8px;">图层</div>
<div class="t c" style="left:793.7px;top:79.7px;color:#e4e4e6;font-size:7.8px;">特性刷</div>
<div class="t" style="left:903.8px;top:47.9px;color:#8a8e98;font-size:7.8px;">ByLayer</div>
<div class="t" style="left:917.6px;top:65.1px;color:#8a8e98;font-size:7.8px;">ByLayer</div>
<div class="t" style="left:920.5px;top:82px;color:#8a8e98;font-size:7.8px;">ByLayer</div>
<div class="t c" style="left:837px;top:95.1px;color:#e4e4e6;font-size:7.8px;">特性</div>
<div class="t c" style="left:917.6px;top:74.4px;color:#e4e4e6;font-size:7.8px;">插入视口</div>
<div class="t c" style="left:917.7px;top:95.1px;color:#e4e4e6;font-size:7.8px;">布局</div>
<div class="t c" style="left:955.4px;top:74.4px;color:#e4e4e6;font-size:7.8px;">粘贴</div>
<div class="t c" style="left:965.6px;top:95.1px;color:#e4e4e6;font-size:7.8px;">工具</div>
<div class="t c" style="left:1013.8px;top:79.6px;color:#e4e4e6;font-size:7.8px;">样式设置</div>
<div class="t c" style="left:1047px;top:79.6px;color:#e4e4e6;font-size:7.8px;">选项</div>
<div class="t c" style="left:1030.6px;top:95.1px;color:#e4e4e6;font-size:7.8px;">选项</div>
<div class="t c" style="left:-15.4px;top:109.1px;color:#fff;font-size:7.8px;">开始</div>
<div class="t c" style="left:41.6px;top:109.1px;color:#dcdde0;font-size:7.8px;">[ 新建图纸_1 ]</div>
<div class="t" style="left:26.8px;top:125.4px;color:#e4e4e6;font-size:7.8px;">全部(0)</div>
<div class="t" style="left:27px;top:141.1px;color:#e4e4e6;font-size:7.8px;">一</div>
<div class="t" style="left:39.9px;top:141.1px;color:#e4e4e6;font-size:7.8px;">基本</div>
<div class="t" style="left:27px;top:156.1px;color:#e4e4e6;font-size:7.8px;">图层</div>
<div class="t" style="left:27px;top:171.4px;color:#e4e4e6;font-size:7.8px;">颜色</div>
<div class="t" style="left:27px;top:186.7px;color:#e4e4e6;font-size:7.8px;">线宽</div>
<div class="t" style="left:27px;top:202.1px;color:#e4e4e6;font-size:7.8px;">线型</div>
<div class="t" style="left:27px;top:217.4px;color:#e4e4e6;font-size:7.8px;">线型比例</div>
<div class="t" style="left:27px;top:232.7px;color:#e4e4e6;font-size:7.8px;">透明度</div>
<div class="t" style="left:105px;top:156.6px;color:#9a9ea8;font-size:7.8px;">0</div>
<div class="t" style="left:119.4px;top:171.9px;color:#8a8e98;font-size:7.8px;">ByLayer</div>
<div class="t" style="left:133px;top:187.2px;color:#8a8e98;font-size:7.8px;">ByLayer</div>
<div class="t" style="left:135.5px;top:202.6px;color:#8a8e98;font-size:7.8px;">ByLayer</div>
<div class="t" style="left:105.3px;top:217.9px;color:#9a9ea8;font-size:7.8px;">1</div>
<div class="t" style="left:104.8px;top:233.2px;color:#8a8e98;font-size:7.8px;">ByLayer</div>
<div class="t" style="left:430.3px;top:129.2px;color:#e4e4e6;font-size:7.8px;">样式(S):</div>
<div class="t" style="left:462.5px;top:129.2px;color:#d6d7da;font-size:7.8px;">Standard</div>
<div class="t" style="left:535px;top:129.2px;color:#e4e4e6;font-size:7.8px;">字高(H):</div>
<div class="t" style="left:567.5px;top:129.2px;color:#c4c6cc;font-size:7.8px;">5</div>
<div class="t" style="left:633.7px;top:129.2px;color:#e4e4e6;font-size:7.8px;">列数:</div>
<div class="t" style="left:655.8px;top:129.2px;color:#c4c6cc;font-size:7.8px;">5</div>
<div class="t" style="left:722.2px;top:129.2px;color:#e4e4e6;font-size:7.8px;">行数:</div>
<div class="t" style="left:744.4px;top:129.2px;color:#c4c6cc;font-size:7.8px;">4</div>
<div class="t" style="left:810.4px;top:129.2px;color:#e4e4e6;font-size:7.8px;">列宽:</div>
<div class="t" style="left:832.8px;top:129.2px;color:#c4c6cc;font-size:7.8px;">50</div>
<div class="t" style="left:899.2px;top:129.2px;color:#e4e4e6;font-size:7.8px;">行高:</div>
<div class="t" style="left:921px;top:129.2px;color:#fff;font-size:7.8px;">1</div>
<div class="t" style="left:984.9px;top:129.2px;color:#e4e4e6;font-size:7.8px;">行</div>
<div class="t c" style="left:-19.1px;top:667.9px;color:#e4e4e6;font-size:7.8px;">模型</div>
<div class="t c" style="left:13.3px;top:667.9px;color:#e4e4e6;font-size:7.8px;">布局1</div>
<div class="t" style="left:1114px;top:667.5px;color:#dcdde0;font-size:7.8px;">1:1</div>
<div class="t" style="left:1139px;top:667.5px;color:#dcdde0;font-size:7.8px;">755.768, 226.433</div></body></html>
